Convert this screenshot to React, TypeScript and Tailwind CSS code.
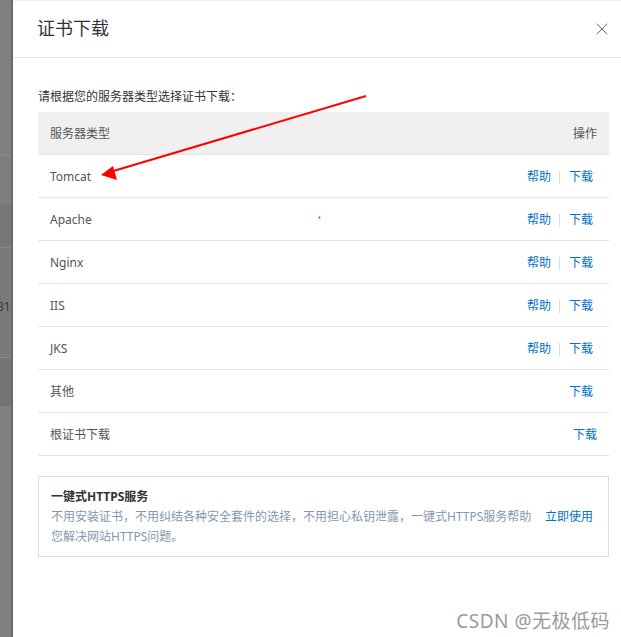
import { X } from 'lucide-react';

const FONT = { fontFamily: '"Noto Sans", "Noto Sans CJK SC", sans-serif' };

const rows: { name: string; help: boolean; wide?: boolean }[] = [
  { name: 'Tomcat', help: true },
  { name: 'Apache', help: true },
  { name: 'Nginx', help: true },
  { name: 'IIS', help: true },
  { name: 'JKS', help: true },
  { name: '其他', help: false },
  { name: '根证书下载', help: false, wide: true },
];

function Backdrop() {
  // what shows of the page behind the dialog
  return (
    <div className="w-[13px] h-full flex flex-col bg-[#808080] border-r-2 border-[#6a6a6a] overflow-hidden">
      <div className="h-[156px] border-b border-[#8c8c8c]" />
      <div className="h-[49px] bg-[#7d7d7d]" />
      <div className="h-[42px] bg-[#767676]" />
      <div className="h-[110px] bg-[#7a7a7a] border-t border-[#888] flex items-center text-[12px] text-[#3a3a3a] -ml-[3px] pt-[8px]">
        31
      </div>
      <div className="h-[49px] bg-[#747474] border-t border-[#888]" />
      <div className="flex-1 bg-[#808080]" />
    </div>
  );
}

export default function App() {
  return (
    <div className="relative w-[621px] h-[637px] flex bg-white overflow-hidden" style={FONT}>
      <Backdrop />

      <div className="relative flex-1 flex flex-col bg-white border-t border-[#efefef]">
        {/* Header */}
        <div className="h-[57px] flex items-center justify-between pl-[24px] pr-[9px] border-b border-[#e3e3e3]">
          <h1 className="text-[18px] text-[#333] leading-none -mt-[2px]">证书下载</h1>
          <X className="w-[20px] h-[20px] text-[#666]" strokeWidth={1.2} />
        </div>

        <div className="pl-[25px] pr-[12px] pt-[30px]">
          <p className="text-[12px] leading-[18px] text-[#333] mb-[6px]">请根据您的服务器类型选择证书下载：</p>

          {/* Table */}
          <div className="text-[12px]">
            <div className="h-[43px] flex items-center justify-between bg-[#f0f0f0] border-b border-[#e3e3e3] px-[12px] pt-[2px] text-[#555]">
              <span>服务器类型</span>
              <span>操作</span>
            </div>
            {rows.map((r) => (
              <div
                key={r.name}
                className={`h-[43px] flex items-center justify-between border-b border-[#e3e3e3] pl-[12px] pt-[2px] text-[#555] ${
                  r.wide ? 'pr-[12px]' : 'pr-[16px]'
                }`}
              >
                <span>{r.name}</span>
                <div className="flex items-center text-[#0070cc]">
                  {r.help && (
                    <>
                      <span>帮助</span>
                      <span className="w-px h-[13px] bg-[#dcdcdc] ml-[8px] mr-[9px]" />
                    </>
                  )}
                  <span>下载</span>
                </div>
              </div>
            ))}
          </div>

          {/* One-click HTTPS */}
          <div className="mt-[20px] border border-[#dcdcdc] pl-[12px] pr-[15px] pt-[10px] pb-[9px] text-[12px] leading-[20px]">
            <div className="font-bold text-[#333]">一键式HTTPS服务</div>
            <div className="flex items-start justify-between">
              <p className="w-[484px] text-[#8497b0]">
                不用安装证书，不用纠结各种安全套件的选择，不用担心私钥泄露，一键式HTTPS服务帮助您解决网站HTTPS问题。
              </p>
              <span className="text-[#0070cc] shrink-0">立即使用</span>
            </div>
          </div>
        </div>

        {/* Watermark */}
        <div className="absolute right-[11px] bottom-[6px] text-[19px] leading-none text-[#9a9a9a] tracking-[0.5px]">
          CSDN @无极低码
        </div>
      </div>

      {/* Red annotation arrow */}
      <svg className="absolute inset-0 pointer-events-none" width="621" height="637" viewBox="0 0 621 637">
        <line x1="366" y1="96" x2="110" y2="172" stroke="#ff0000" strokeWidth="2" />
        <polygon points="101,175 113,166 117,180" fill="#ff0000" />
        <circle cx="319.5" cy="217.5" r="0.9" fill="#ff0000" />
      </svg>
    </div>
  );
}
